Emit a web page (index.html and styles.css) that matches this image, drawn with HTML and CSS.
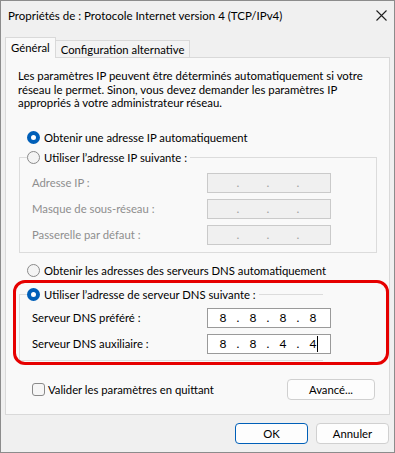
FILE: index.html
```html
<!DOCTYPE html>
<html lang="fr">
<head>
<meta charset="utf-8">
<title>Propriétés de : Protocole Internet version 4 (TCP/IPv4)</title>
<link rel="stylesheet" href="styles.css">
</head>
<body>
<div class="window">
  <div class="titlebar">
    <span class="title">Propriétés de : Protocole Internet version 4 (TCP/IPv4)</span>
    <svg class="close" width="11" height="11" viewBox="0 0 11 11"><path d="M0.5 0.5 L10.5 10.5 M10.5 0.5 L0.5 10.5" stroke="#1f1f1f" stroke-width="1.1" fill="none"/></svg>
  </div>
  <div class="tabs">
    <div class="tab active">Général</div>
    <div class="tab">Configuration alternative</div>
  </div>
  <div class="panel">
    <p class="intro">Les paramètres IP peuvent être déterminés automatiquement si votre<br>réseau le permet. Sinon, vous devez demander les paramètres IP<br>appropriés à votre administrateur réseau.</p>

    <div class="radio-row r1"><span class="radio on"></span><span>Obtenir une adresse IP automatiquement</span></div>

    <div class="group g1">
      <div class="legend"><span class="radio"></span><span>Utiliser l’adresse IP suivante :</span></div>
      <div class="rows">
        <div class="row disabled"><span class="label">Adresse IP :</span><div class="ip"><span class="seg"></span><span class="dot">.</span><span class="seg"></span><span class="dot">.</span><span class="seg"></span><span class="dot">.</span><span class="seg"></span></div></div>
        <div class="row disabled"><span class="label">Masque de sous-réseau :</span><div class="ip"><span class="seg"></span><span class="dot">.</span><span class="seg"></span><span class="dot">.</span><span class="seg"></span><span class="dot">.</span><span class="seg"></span></div></div>
        <div class="row disabled"><span class="label">Passerelle par défaut :</span><div class="ip"><span class="seg"></span><span class="dot">.</span><span class="seg"></span><span class="dot">.</span><span class="seg"></span><span class="dot">.</span><span class="seg"></span></div></div>
      </div>
    </div>

    <div class="radio-row r3"><span class="radio"></span><span>Obtenir les adresses des serveurs DNS automatiquement</span></div>

    <div class="group g2">
      <div class="legend"><span class="radio on"></span><span>Utiliser l’adresse de serveur DNS suivante :</span></div>
      <div class="rows rows2">
        <div class="row"><span class="label">Serveur DNS préféré :</span><div class="ip"><span class="seg">8</span><span class="dot">.</span><span class="seg">8</span><span class="dot">.</span><span class="seg">8</span><span class="dot">.</span><span class="seg">8</span></div></div>
        <div class="row"><span class="label">Serveur DNS auxiliaire :</span><div class="ip"><span class="seg">8</span><span class="dot">.</span><span class="seg">8</span><span class="dot">.</span><span class="seg">4</span><span class="dot">.</span><span class="seg">4<span class="caret"></span></span></div></div>
      </div>
    </div>

    <div class="check-row">
      <span class="checkbox"></span><span class="check-label">Valider les paramètres en quittant</span>
      <button class="btn adv">Avancé...</button>
    </div>
  </div>
  <div class="footer">
    <button class="btn ok">OK</button>
    <button class="btn">Annuler</button>
  </div>
  <div class="highlight"></div>
</div>
</body>
</html>
```

FILE: styles.css
```css
* { box-sizing: border-box; }
html, body { margin: 0; padding: 0; }
body {
  width: 395px;
  height: 453px;
  font-family: Lato, "Noto Sans", sans-serif;
  font-size: 11.3px;
  color: #000;
  background: #f0f0f0;
}
.window {
  position: relative;
  width: 395px;
  height: 453px;
  border: 1px solid #8c8c8c;
  background: #f0f0f0;
  display: flex;
  flex-direction: column;
}
.titlebar {
  height: 29px;
  display: flex;
  align-items: center;
  justify-content: space-between;
  padding: 0 7px 0 7px;
  font-size: 11.5px;
}
.title { white-space: nowrap; }
.close { display: block; }
.tabs {
  height: 27px;
  display: flex;
  align-items: flex-end;
  padding-left: 4px;
}
.tab {
  height: 17px;
  padding: 0 5px;
  display: flex;
  align-items: center;
  border: 1px solid #d9d9d9;
  border-left: none;
  border-bottom: none;
  background: #f3f3f3;
  white-space: nowrap;
}
.tab.active {
  height: 21px;
  margin-bottom: -1px;
  border-left: 1px solid #d9d9d9;
  background: #f9f9f9;
  position: relative;
  z-index: 1;
  padding-bottom: 2px;
}
.panel {
  margin: 0 4px;
  height: 358px;
  border: 1px solid #d9d9d9;
  background: #f9f9f9;
  padding: 11px 12px 0 12px;
  display: flex;
  flex-direction: column;
}
.intro {
  margin: 0;
  line-height: 13.5px;
  white-space: nowrap;
  font-size: 11.4px;
}
.radio-row {
  height: 16px;
  display: flex;
  align-items: center;
  gap: 4px;
  padding-left: 9px;
  white-space: nowrap;
}
.r1 { margin-top: 20px; }
.r3 { margin-top: 10px; }
.radio {
  width: 13px;
  height: 13px;
  border-radius: 50%;
  border: 1px solid #8a8a8a;
  background: #f4f4f4;
  flex: none;
}
.radio.on {
  border: 4px solid #005fb8;
  background: #fff;
}
.group {
  margin-left: 1px;
  border: 1px solid #dcdcdc;
}
.g1 { margin-top: 11px; }
.g2 {
  margin-top: 15px;
  margin-right: 54px;
  border-right: none;
}
.legend {
  height: 16px;
  margin: -8px 0 0 7px;
  display: flex;
  align-items: center;
  gap: 4px;
  width: fit-content;
  padding-right: 3px;
  background: #f9f9f9;
  white-space: nowrap;
}
.rows {
  padding: 7px 12px 7px 12px;
  display: flex;
  flex-direction: column;
  gap: 6px;
}
.rows2 { padding-top: 5px; padding-bottom: 6px; }
.row {
  height: 20px;
  display: grid;
  grid-template-columns: 175px 124px;
  align-items: center;
}
.row.disabled .label { color: #8e8e8e; }
.ip {
  height: 20px;
  display: flex;
  align-items: center;
  padding-left: 3px;
  border: 1px solid #9a9a9a;
  background: #fff;
  line-height: 18px;
  font-size: 12px;
}
.row.disabled .ip {
  border-color: #cacaca;
  background: #f0f0f0;
  color: #a0a0a0;
}
.seg {
  width: 24px;
  text-align: center;
  display: flex;
  justify-content: center;
  align-items: center;
}
.dot { width: 6px; text-align: center; }
.caret {
  display: inline-block;
  width: 1px;
  height: 16px;
  background: #000;
  margin-left: 1px;
  margin-right: -2px;
}
.check-row {
  margin-top: 18px;
  height: 21px;
  display: flex;
  align-items: center;
}
.checkbox {
  width: 13px;
  height: 13px;
  margin-left: 14px;
  border: 1px solid #8a8a8a;
  border-radius: 3px;
  background: #f6f6f6;
  flex: none;
}
.check-label { margin-left: 3px; white-space: nowrap; }
.btn {
  font-family: inherit;
  font-size: 11.3px;
  color: #000;
  height: 21px;
  width: 73px;
  padding: 0;
  border: 1px solid #d0d0d0;
  border-radius: 4px;
  background: #fdfdfd;
}
.adv { width: 88px; margin-left: auto; margin-right: 2px; }
.ok { border-color: #005fb8; }
.footer {
  display: flex;
  justify-content: flex-end;
  gap: 8px;
  padding: 8px 5px 0 0;
}
.highlight {
  position: absolute;
  left: 12px;
  top: 279px;
  width: 376px;
  height: 85px;
  border: 3px solid #e60000;
  border-radius: 12px;
  pointer-events: none;
}
```
